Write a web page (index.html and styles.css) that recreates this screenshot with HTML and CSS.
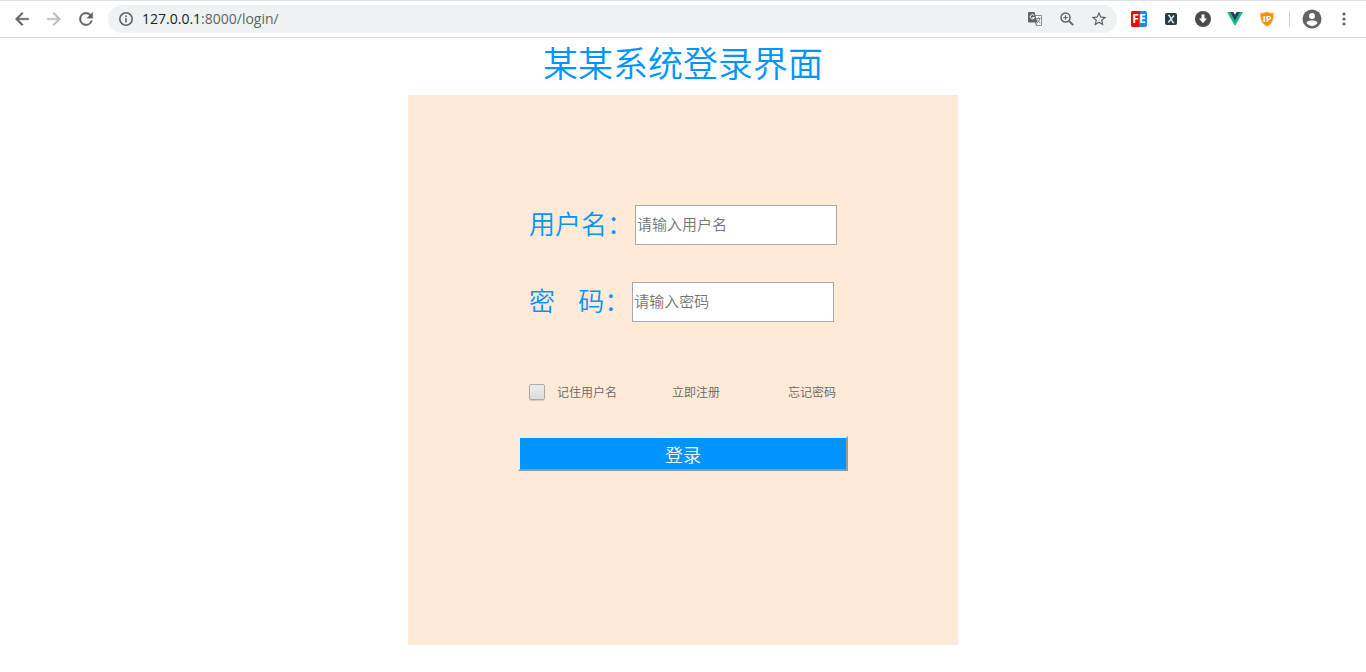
FILE: index.html
```
<!DOCTYPE html>
<html lang="zh-CN">
<head>
  <meta charset="UTF-8">
  <meta name="viewport" content="width=device-width, initial-scale=1.0">
  <title>登录</title>
  <link rel="stylesheet" href="styles.css">
</head>
<body>

  <header class="toolbar">
    <nav class="nav-buttons">
      <button type="button" class="icon-btn" aria-label="back">
        <svg width="20" height="20" viewBox="0 0 24 24"><path fill="#5f6368" stroke="#5f6368" stroke-width=".5" d="M20 11H7.8l5.6-5.6L12 4l-8 8 8 8 1.4-1.4L7.8 13H20v-2z"/></svg>
      </button>
      <button type="button" class="icon-btn" aria-label="forward">
        <svg width="20" height="20" viewBox="0 0 24 24"><path fill="#babcbe" stroke="#babcbe" stroke-width=".5" d="M4 11h12.2l-5.6-5.6L12 4l8 8-8 8-1.4-1.4 5.6-5.6H4v-2z"/></svg>
      </button>
      <button type="button" class="icon-btn" aria-label="reload">
        <svg width="20" height="20" viewBox="0 0 24 24"><path fill="#5f6368" stroke="#5f6368" stroke-width=".5" d="M17.65 6.35A7.96 7.96 0 0 0 12 4a8 8 0 1 0 7.73 10h-2.08A6 6 0 1 1 12 6c1.66 0 3.14.69 4.22 1.78L13 11h7V4l-2.35 2.35z"/></svg>
      </button>
    </nav>

    <div class="address">
      <svg width="16" height="16" viewBox="0 0 16 16" fill="none" stroke="#5f6368" stroke-width="1.6"><circle cx="8" cy="8" r="6.2"/><path d="M8 7v4.4M8 4.4v1.7"/></svg>
      <div class="url"><span class="host">127.0.0.1</span>:8000/login/</div>
      <button type="button" class="icon-btn" aria-label="translate">
        <svg width="16" height="16" viewBox="0 0 16 16"><path fill="#fafafa" stroke="#8b8e91" d="M6 4.5h8.500v10H9.500z"/><path fill="#5f6368" d="M2 1h5.500l3 10.500H2a1 1 0 0 1-1-1V2a1 1 0 0 1 1-1z"/><path fill="none" stroke="#fff" d="M7.300 4.600A2.200 2.200 0 1 0 7.500 6.500H5.300"/><path fill="none" stroke="#777b7f" d="M9.500 7.500h4M11.500 6.500v1M12.800 7.500c-.3 2-1.500 3.500-2.800 4.300M10.300 8.500c.6 1.600 1.600 2.600 3 3.300M8.500 11.500l1 3"/></svg>
      </button>
      <button type="button" class="icon-btn" aria-label="zoom">
        <svg width="16" height="16" viewBox="0 0 16 16" fill="none" stroke="#5f6368"><circle cx="6.500" cy="6.500" r="4.500" stroke-width="1.500"/><path stroke-width="1.900" d="M9.800 9.800l4.400 4.400"/><path stroke-width="1.200" d="M4.300 6.500h4.400M6.500 4.300v4.400"/></svg>
      </button>
      <button type="button" class="icon-btn" aria-label="bookmark">
        <svg width="18" height="18" viewBox="0 0 24 24"><path fill="#5f6368" d="M22 9.240l-7.190-.62L12 2 9.190 8.630 2 9.240l5.460 4.730L5.820 21 12 17.270 18.180 21l-1.630-7.030L22 9.240zM12 15.400l-3.760 2.270 1-4.280-3.320-2.880 4.380-.38L12 6.100l1.710 4.040 4.380.38-3.320 2.880 1 4.280L12 15.400z"/></svg>
      </button>
    </div>

    <div class="extensions">
      <button type="button" class="icon-btn" aria-label="FeHelper">
        <svg width="16" height="16" viewBox="0 0 16 16"><rect width="16" height="16" rx="2" fill="#0a8dff"/><path fill="#f00" d="M2 0h7L8 8v8H2a2 2 0 0 1-2-2V2a2 2 0 0 1 2-2z"/><text x="8" y="12" class="mark mark-fe">FE</text></svg>
      </button>
      <button type="button" class="icon-btn" aria-label="xpath">
        <svg width="16" height="16" viewBox="0 0 16 16"><rect x="2" y="2" width="12" height="12" rx="2" fill="#263c49"/><path fill="none" stroke="#dce6eb" stroke-width="1.500" d="M5 4.500h1.300l3.700 7h1.200M11 4.500L5.300 11.500"/></svg>
      </button>
      <button type="button" class="icon-btn" aria-label="download">
        <svg width="16" height="16" viewBox="0 0 16 16"><circle cx="8" cy="8" r="8" fill="#4b4b4b"/><path fill="#fff" d="M6.500 3.500h3v4H12l-4 4.700-4-4.700h2.500z"/></svg>
      </button>
      <button type="button" class="icon-btn" aria-label="Vue">
        <svg width="16" height="16" viewBox="0 0 16 16"><path fill="#15b881" d="M0 1h16L8 15z"/><path fill="#263c57" d="M3.200 1h9.600L8 9.500z"/><path fill="#fff" d="M6.300 1h3.400L8 3.800z"/></svg>
      </button>
      <button type="button" class="icon-btn" aria-label="IP">
        <svg width="16" height="16" viewBox="0 0 16 16"><path fill="#f98b15" stroke="#ffc163" d="M8 .7c2 1.500 4.300 1.500 6.500 1.500 0 6-.8 10.300-6.500 13.100C2.300 12.500 1.500 8.200 1.500 2.200 3.700 2.200 6 2.200 8 .7z"/><text x="8" y="11" class="mark mark-ip">IP</text></svg>
      </button>
    </div>

    <div class="profile">
      <button type="button" class="icon-btn" aria-label="profile">
        <svg width="20" height="20" viewBox="0 0 20 20"><circle cx="10" cy="10" r="9.500" fill="#5f6368"/><circle cx="10" cy="7" r="3" fill="#fff"/><path fill="#fff" d="M4.300 13.800C5.500 12 8 11.300 10 11.300s4.500.7 5.700 2.500C14.500 15.800 12.300 17 10 17s-4.500-1.200-5.700-3.200z"/></svg>
      </button>
      <button type="button" class="icon-btn" aria-label="menu">
        <svg width="16" height="16" viewBox="0 0 16 16" fill="#5f6368"><circle cx="8" cy="3" r="1.600"/><circle cx="8" cy="8" r="1.600"/><circle cx="8" cy="13" r="1.600"/></svg>
      </button>
    </div>
  </header>

  <main>
    <h1>某某系统登录界面</h1>
    <form class="login">
      <div class="field">
        <label for="username">用户名：</label>
        <input type="text" id="username" placeholder="请输入用户名">
      </div>
      <div class="field">
        <label for="password">密&nbsp;&nbsp;&nbsp;&nbsp;码：</label>
        <input type="password" id="password" placeholder="请输入密码">
      </div>
      <div class="options">
        <div class="remember">
          <input type="checkbox" id="remember">
          <label for="remember">记住用户名</label>
        </div>
        <a href="#">立即注册</a>
        <a href="#">忘记密码</a>
      </div>
      <button type="button" class="submit">登录</button>
    </form>
  </main>

</body>
</html>
```
FILE: styles.css
```
:root {
  --blue: #0094ff;
  --panel: #ffe9d7;
  --icon: #5f6368;
}

* {
  margin: 0;
  padding: 0;
  box-sizing: border-box;
}

body {
  background: #fff;
  font-family: "Noto Sans CJK SC", sans-serif;
  font-weight: 350;
}

/* browser toolbar */
.toolbar {
  display: flex;
  align-items: center;
  height: 38px;
  padding: 0 12px;
  border-top: 1px solid #dee1e6;
  border-bottom: 1px solid #d9dbdd;
}

.icon-btn {
  display: flex;
  align-items: center;
  justify-content: center;
  width: 20px;
  height: 20px;
  border: none;
  background: none;
}

.nav-buttons {
  display: flex;
  gap: 12px;
  margin-right: 12px;
}

.address {
  flex: 1;
  display: flex;
  align-items: center;
  gap: 12px;
  height: 28px;
  padding: 0 8px 0 10px;
  border-radius: 14px;
  background: #eff2f3;
}

.url {
  flex: 1;
  margin-left: -4px;
  font: 400 14px/20px "Open Sans", sans-serif;
  color: var(--icon);
}

.host {
  color: #202124;
}

.extensions {
  display: flex;
  gap: 12px;
  margin: 0 12px;
}

.mark {
  font-family: "Open Sans", sans-serif;
  font-weight: 700;
  fill: #fff;
  text-anchor: middle;
}

.mark-fe {
  font-size: 12px;
}

.mark-ip {
  font-size: 9px;
}

.profile {
  display: flex;
  gap: 12px;
  padding-left: 12px;
  border-left: 1px solid #d0d2d5;
  height: 16px;
  align-items: center;
}

/* login page */
h1 {
  height: 57px;
  font-size: 35px;
  line-height: 48px;
  font-weight: 350;
  text-align: center;
  color: var(--blue);
}

.login {
  max-width: 550px;
  min-height: 550px;
  margin: 0 auto;
  padding: 110px 110px 0;
  background: var(--panel);
}

.field {
  display: flex;
  align-items: flex-start;
  gap: 2px;
  height: 40px;
  margin: 0 0 37px 11px;
}

.field label {
  font-size: 26px;
  line-height: 36px;
  white-space: nowrap;
  color: var(--blue);
}

.field input {
  width: 202px;
  height: 40px;
  padding: 0 1px 3px;
  border: 1px solid #a9a9a9;
  background: #fff;
  font-family: inherit;
  font-size: 15px;
  font-weight: 350;
}

.field input::placeholder {
  color: #757575;
}

.options {
  display: grid;
  grid-template-columns: 143px 1fr auto;
  align-items: center;
  height: 20px;
  margin: 60px 12px 34px 11px;
  font-size: 12px;
  line-height: 20px;
  color: #666;
}

.options a {
  color: inherit;
  text-decoration: none;
}

.remember {
  display: flex;
  align-items: center;
  gap: 12px;
}

.remember input {
  appearance: none;
  width: 16px;
  height: 16px;
  border: 1px solid #aaa;
  border-radius: 2px;
  background: linear-gradient(#ededed, #dcdcdc);
  box-shadow: 0 1px 1px rgba(0, 0, 0, 0.15);
}

.submit {
  display: block;
  width: 100%;
  height: 35px;
  border: 2px solid;
  border-color: #eee #999 #999 #eee;
  background: var(--blue);
  color: #fff;
  font-family: inherit;
  font-size: 18px;
  line-height: 28px;
  font-weight: 350;
}
```
